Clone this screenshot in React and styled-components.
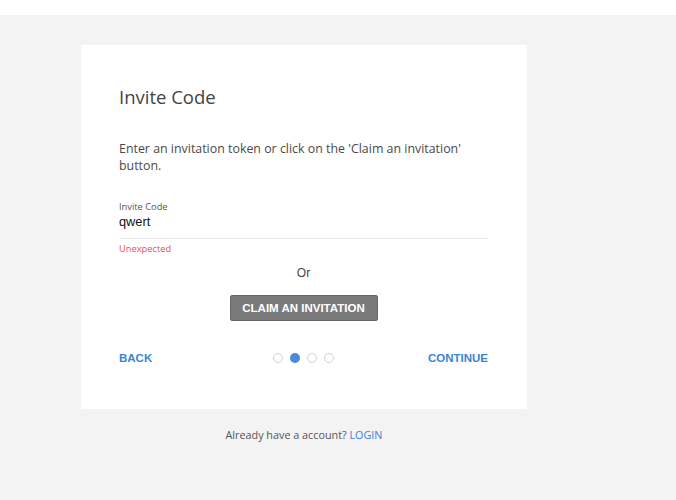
import React from "react";
import styled, { createGlobalStyle } from "styled-components";

const GlobalStyle = createGlobalStyle`
  html, body {
    margin: 0;
    padding: 0;
    background: #ffffff;
  }
`;

const Page = styled.div`
  margin-top: 15px;
  background: #f3f3f3;
  min-height: 485px;
  padding: 30px 0 0 81px;
  box-sizing: border-box;
  font-family: "Open Sans", "Liberation Sans", sans-serif;
`;

const Column = styled.div`
  width: 446px;
  display: flex;
  flex-direction: column;
`;

const Card = styled.div`
  background: #ffffff;
  height: 364px;
  box-sizing: border-box;
  padding: 40px 39px 0 38px;
  display: flex;
  flex-direction: column;
`;

const Title = styled.h1`
  margin: 0;
  font-size: 18.5px;
  font-weight: 400;
  color: #444;
  line-height: 24px;
`;

const Intro = styled.p`
  margin: 31px 0 0;
  font-size: 12.4px;
  line-height: 17px;
  color: #4a4a4a;
  padding-right: 20px;
`;

const Field = styled.div`
  margin-top: 26px;
  border-bottom: 1px solid #ebebeb;
  padding-bottom: 8px;
`;

const Label = styled.div`
  font-size: 9.3px;
  line-height: 13px;
  color: #555;
`;

const Value = styled.div`
  margin-top: 1px;
  font-family: "Liberation Sans", Arial, sans-serif;
  font-size: 12.8px;
  line-height: 16px;
  color: #111;
`;

const Error = styled.div`
  margin-top: 3px;
  font-size: 9.3px;
  line-height: 13px;
  color: #e55353;
`;

const Or = styled.div`
  margin-top: 11px;
  text-align: center;
  font-family: "Liberation Sans", Arial, sans-serif;
  font-size: 12px;
  line-height: 15px;
  color: #444;
`;

const ClaimButton = styled.button`
  align-self: center;
  margin-top: 14px;
  width: 148px;
  height: 26px;
  background: #7a7a7a;
  border: 1px solid #666;
  border-radius: 2px;
  color: #fff;
  font-family: "Liberation Sans", Arial, sans-serif;
  font-weight: 700;
  font-size: 11.5px;
  text-transform: uppercase;
  padding: 0;
`;

const Footer = styled.div`
  margin-top: 31px;
  display: grid;
  grid-template-columns: 1fr auto 1fr;
  align-items: center;
`;

const LinkButton = styled.span`
  font-family: "Liberation Sans", Arial, sans-serif;
  font-weight: 700;
  font-size: 11.5px;
  color: #3a84d6;
  text-transform: uppercase;
  justify-self: ${(p) => (p.$end ? "end" : "start")};
`;

const Dots = styled.div`
  display: flex;
  gap: 7px;
`;

const Dot = styled.span`
  width: 10px;
  height: 10px;
  border-radius: 50%;
  box-sizing: border-box;
  background: ${(p) => (p.$active ? "#4a8ad8" : "#fff")};
  border: ${(p) => (p.$active ? "none" : "1.5px solid #d0d0d0")};
`;

const Bottom = styled.div`
  margin-top: 18px;
  text-align: center;
  font-size: 10.8px;
  color: #555;
`;

const Login = styled.span`
  color: #3a84d6;
`;

const App = () => {
  const steps = [false, true, false, false];
  return (
    <>
      <GlobalStyle />
      <Page>
        <Column>
          <Card>
            <Title>Invite Code</Title>
            <Intro>
              Enter an invitation token or click on the 'Claim an invitation'
              button.
            </Intro>
            <Field>
              <Label>Invite Code</Label>
              <Value>qwert</Value>
            </Field>
            <Error>Unexpected</Error>
            <Or>Or</Or>
            <ClaimButton>Claim an invitation</ClaimButton>
            <Footer>
              <LinkButton>Back</LinkButton>
              <Dots>
                {steps.map((active, i) => (
                  <Dot key={i} $active={active} />
                ))}
              </Dots>
              <LinkButton $end>Continue</LinkButton>
            </Footer>
          </Card>
          <Bottom>
            Already have a account? <Login>LOGIN</Login>
          </Bottom>
        </Column>
      </Page>
    </>
  );
};

export default App;
